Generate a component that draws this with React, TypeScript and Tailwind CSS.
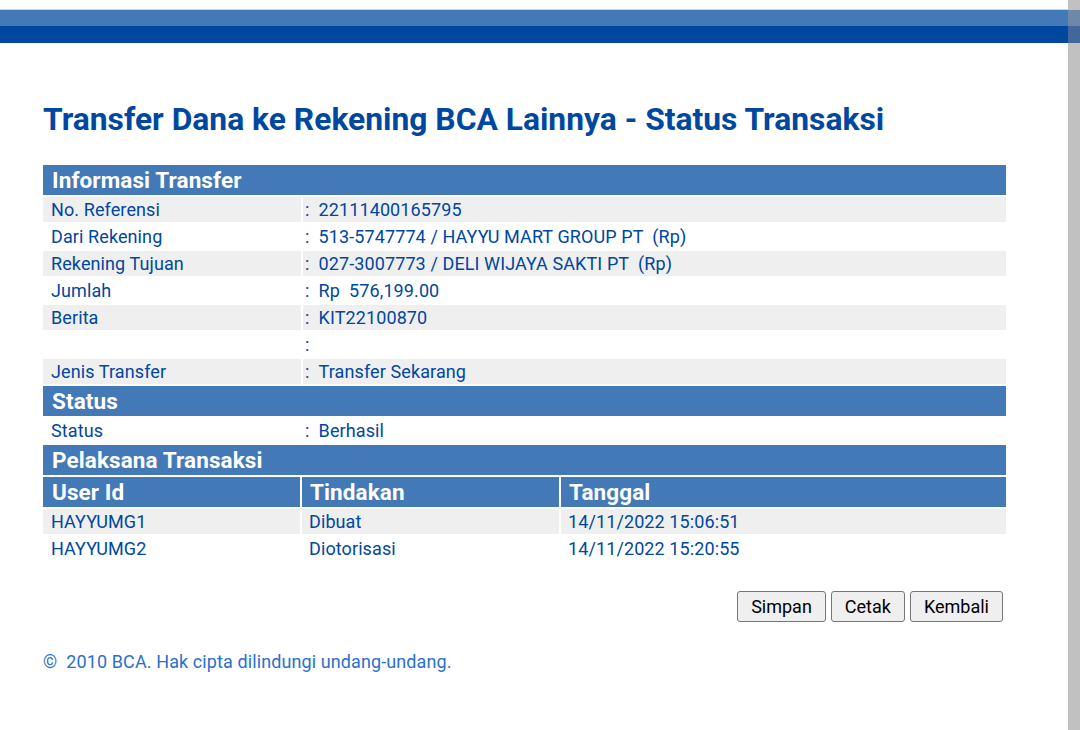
import React from 'react'

const infoRows = [
  { label: 'No. Referensi', value: '22111400165795' },
  { label: 'Dari Rekening', value: '513-5747774 / HAYYU MART GROUP PT \u00a0(Rp)' },
  { label: 'Rekening Tujuan', value: '027-3007773 / DELI WIJAYA SAKTI PT \u00a0(Rp)' },
  { label: 'Jumlah', value: 'Rp \u00a0576,199.00' },
  { label: 'Berita', value: 'KIT22100870' },
  { label: '', value: '' },
  { label: 'Jenis Transfer', value: 'Transfer Sekarang' },
]

const pelaksana = [
  { user: 'HAYYUMG1', action: 'Dibuat', date: '14/11/2022 15:06:51' },
  { user: 'HAYYUMG2', action: 'Diotorisasi', date: '14/11/2022 15:20:55' },
]

function SectionHeader({ title }: { title: string }) {
  return (
    <div className="col-span-2 h-[30px] bg-[#4279b6] pl-[9px] text-[22.5px] leading-[30px] font-bold text-white">
      {title}
    </div>
  )
}

function InfoRow({ label, value, shaded }: { label: string; value: string; shaded: boolean }) {
  const bg = shaded ? 'bg-[#efefef]' : 'bg-white'
  return (
    <>
      <div className={`h-[25px] pl-[8px] leading-[25px] ${bg}`}>{label}</div>
      <div className={`h-[25px] pl-[2px] leading-[25px] whitespace-pre ${bg}`}>
        {':\u00a0\u00a0' + value}
      </div>
    </>
  )
}

export default function App() {
  return (
    <div className="flex h-[730px] w-[1080px] overflow-hidden bg-white font-['Roboto',sans-serif]">
      <main className="flex-1">
        <div className="mt-[9px] h-px bg-[#c9d1da]" />
        <div className="h-[16px] bg-[#4279b6]" />
        <div className="h-[17px] border-b border-[#06429a] bg-[#0047a0]" />

        <div className="pl-[43px]">
          <h1 className="mt-[58px] text-[31.8px] leading-[37px] font-bold text-[#0047a0]">
            Transfer Dana ke Rekening BCA Lainnya - Status Transaksi
          </h1>

          <div className="mt-[27px] grid w-[963px] grid-cols-[258px_1fr] gap-[2px] text-[18px] tracking-[0.1px] text-[#0047a0]">
            <SectionHeader title="Informasi Transfer" />
            {infoRows.map((row, i) => (
              <InfoRow key={i} label={row.label} value={row.value} shaded={i % 2 === 0} />
            ))}
            <SectionHeader title="Status" />
            <InfoRow label="Status" value="Berhasil" shaded={false} />
            <SectionHeader title="Pelaksana Transaksi" />
          </div>

          <div className="mt-[2px] grid w-[963px] grid-cols-[257px_257px_1fr] gap-[2px] text-[18px] tracking-[0.1px] text-[#0047a0]">
            <div className="h-[30px] bg-[#4279b6] pl-[9px] text-[22.5px] leading-[30px] font-bold text-white">User Id</div>
            <div className="h-[30px] bg-[#4279b6] pl-[8px] text-[22.5px] leading-[30px] font-bold text-white">Tindakan</div>
            <div className="h-[30px] bg-[#4279b6] pl-[8px] text-[22.5px] leading-[30px] font-bold text-white">Tanggal</div>
            {pelaksana.map((row, i) => {
              const bg = i % 2 === 0 ? 'bg-[#efefef]' : 'bg-white'
              return (
                <React.Fragment key={row.user}>
                  <div className={`h-[25px] pl-[8px] leading-[25px] ${bg}`}>{row.user}</div>
                  <div className={`h-[25px] pl-[7px] leading-[25px] ${bg}`}>{row.action}</div>
                  <div className={`h-[25px] pl-[7px] leading-[25px] ${bg}`}>{row.date}</div>
                </React.Fragment>
              )
            })}
          </div>

          <div className="mt-[30px] flex w-[963px] justify-end gap-[5px] pr-[3px]">
            {['Simpan', 'Cetak', 'Kembali'].map((b) => (
              <button
                key={b}
                className="h-[31px] rounded-[3px] border border-[#767676] bg-[#efefef] px-[13px] text-[18px] leading-[29px] text-black"
              >
                {b}
              </button>
            ))}
          </div>

          <p className="mt-[29px] text-[18px] leading-[21px] tracking-[0.1px] text-[#2a70cc]">
            ©&nbsp; 2010 BCA. Hak cipta dilindungi undang-undang.
          </p>
        </div>
      </main>

      <div className="flex w-[12px] flex-col bg-[#c1c1c1]">
        <div className="h-[10px]" />
        <div className="h-[16px] bg-[#6c89a8]" />
        <div className="h-[17px] bg-[#41679b]" />
      </div>
    </div>
  )
}
